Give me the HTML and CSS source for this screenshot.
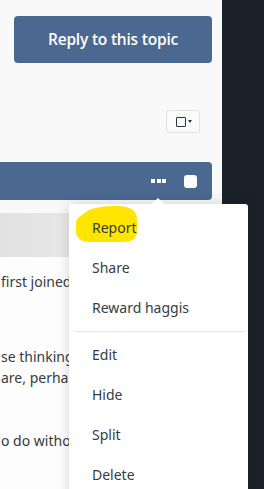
FILE: index.html
```html
<!DOCTYPE html>
<html>
<head>
<meta charset="utf-8">
<link rel="stylesheet" href="styles.css">
</head>
<body>
<div class="page">
  <div class="main">
    <div class="reply-wrap">
      <button class="reply">Reply to this topic</button>
    </div>
    <div class="tools">
      <button class="select-btn"><span class="box"></span><span class="caret"></span></button>
    </div>
    <div class="post-bar">
      <span class="dots"><i></i><i></i><i></i></span>
      <span class="check"></span>
    </div>
    <div class="post">
      <div class="post-head"></div>
      <div class="post-body">
        <p class="p1">first joined</p>
        <p class="p2">se thinking<br>are, perhaps</p>
        <p class="p3">o do without</p>
      </div>
    </div>
  </div>
  <div class="sidebar"></div>
</div>
<div class="menu">
  <span class="arrow"></span>
  <svg class="marker" width="64" height="40" viewBox="0 0 64 40"><path d="M10 6 C16 1 30 0 42 0 C54 0 61 5 61 13 L61 26 C61 33 55 36 47 36 L14 36 C5 36 0 32 0 25 L0 17 C0 12 6 9 10 6 Z" fill="#ffe500"/></svg>
  <ul class="items">
    <li class="item report">Report</li>
    <li class="item">Share</li>
    <li class="item">Reward haggis</li>
    <li class="sep"></li>
    <li class="item">Edit</li>
    <li class="item">Hide</li>
    <li class="item">Split</li>
    <li class="item">Delete</li>
  </ul>
</div>
</body>
</html>
```

FILE: styles.css
```css
html, body {
  margin: 0;
  padding: 0;
}
body {
  width: 264px;
  height: 489px;
  overflow: hidden;
  position: relative;
  font-family: "Noto Sans", "Open Sans", sans-serif;
  color: #353c41;
}
.page {
  display: flex;
  height: 489px;
}
.main {
  width: 222px;
  background: #f9f9f9;
  overflow: hidden;
}
.sidebar {
  flex: 1;
  background: #1b212b;
}
.reply-wrap {
  padding: 16px 10px 0 14px;
}
.reply {
  display: block;
  width: 198px;
  height: 47px;
  border: 0;
  border-radius: 4px;
  background: #4b6890;
  color: #fff;
  font-family: "Open Sans", "Noto Sans", sans-serif;
  font-weight: 600;
  font-size: 15.5px;
  letter-spacing: -0.2px;
  padding: 0 0 1px;
}
.tools {
  display: flex;
  justify-content: flex-end;
  padding-right: 22px;
  margin-top: 47px;
}
.select-btn {
  width: 34px;
  height: 23px;
  border: 1px solid #e2e2e2;
  border-radius: 3px;
  background: #fbfbfb;
  display: flex;
  align-items: center;
  justify-content: center;
  gap: 2px;
  padding: 0 0 0 1px;
}
.box {
  width: 8px;
  height: 8px;
  border: 1.5px solid #2d3440;
  border-radius: 1px;
}
.caret {
  width: 0;
  height: 0;
  border-left: 2.5px solid transparent;
  border-right: 2.5px solid transparent;
  border-top: 3px solid #2d3440;
}
.post-bar {
  margin-top: 29px;
  width: 212px;
  height: 38px;
  background: #4b6890;
  border-radius: 0 4px 4px 0;
  display: flex;
  align-items: center;
  justify-content: flex-end;
  box-sizing: border-box;
  padding-right: 15px;
}
.dots {
  display: flex;
  gap: 1.5px;
  margin-right: 18px;
  margin-top: -1px;
}
.dots i {
  width: 4px;
  height: 4px;
  background: #fff;
}
.check {
  width: 13px;
  height: 13px;
  background: #fff;
  border-radius: 3px;
}
.post {
  margin-top: 13px;
}
.post-head {
  height: 44px;
  width: 69px;
  background: linear-gradient(90deg, #e1e1e1, #e8e8e8);
}
.post-body {
  width: 68px;
  overflow: hidden;
  background: #fdfdfd;
  padding: 14px 0 40px 1px;
  font-size: 14px;
  line-height: 21px;
  white-space: nowrap;
}
.post-body p {
  margin: 0;
}
.p2 {
  margin-top: 54px !important;
}
.p3 {
  margin-top: 42px !important;
}
.menu {
  position: absolute;
  left: 69px;
  top: 204px;
  width: 179px;
  height: 300px;
  background: #fff;
  border-radius: 3px;
  box-shadow: 0 0 14px rgba(0, 0, 0, 0.16);
}
.arrow {
  position: absolute;
  left: 83px;
  top: -6px;
  width: 0;
  height: 0;
  border-left: 6px solid transparent;
  border-right: 6px solid transparent;
  border-bottom: 6px solid #fff;
}
.marker {
  position: absolute;
  left: 7px;
  top: 2px;
}
.items {
  list-style: none;
  margin: 0;
  padding: 4px 0 0;
  position: relative;
}
.item {
  height: 40px;
  line-height: 40px;
  padding-left: 23px;
  font-size: 14px;
  color: #353c41;
}
.sep {
  height: 1px;
  background: #e6e6e6;
  margin: 3px 4px 3px 5px;
}
```
